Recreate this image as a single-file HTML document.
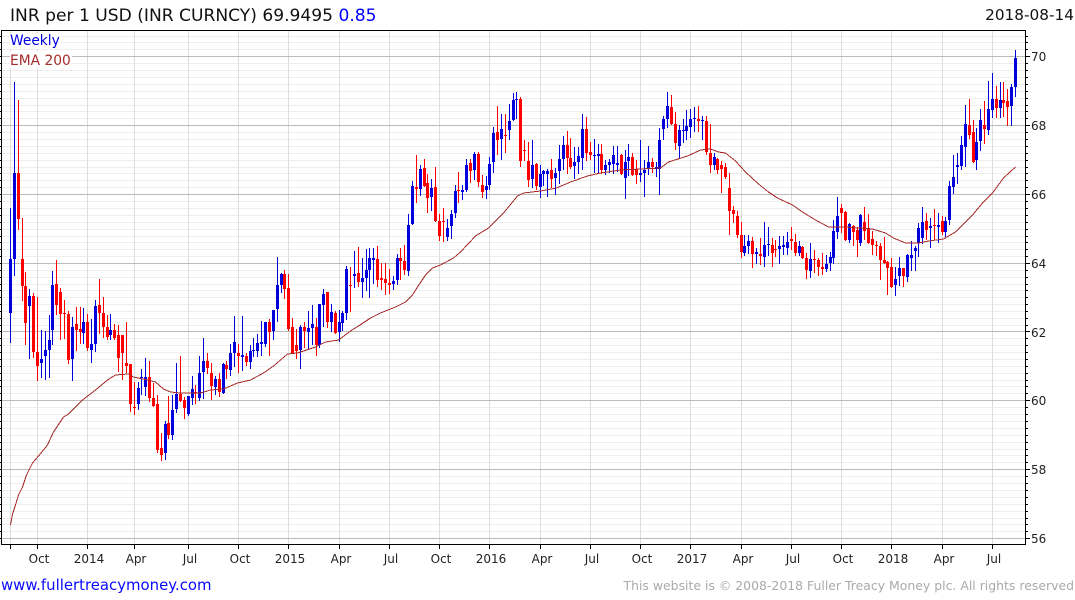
<!DOCTYPE html>
<html><head><meta charset="utf-8"><title>INR per 1 USD</title>
<style>
html,body{margin:0;padding:0;background:#fff;width:1075px;height:600px;overflow:hidden}
svg{display:block}
text{font-family:"DejaVu Sans",sans-serif;fill:#111}
.a{font-size:12px;fill:#222}
.g{shape-rendering:crispEdges;fill:none}
</style></head><body>
<svg width="1075" height="600" viewBox="0 0 1075 600" xmlns="http://www.w3.org/2000/svg">
<rect width="1075" height="600" fill="#fff"/>
<path class="g" stroke="#eee" d="M2 36.5H1025M2 42.5H1025M2 49.5H1025M2 63.5H1025M2 70.5H1025M2 77.5H1025M2 84.5H1025M2 91.5H1025M2 98.5H1025M2 105.5H1025M2 111.5H1025M2 118.5H1025M2 132.5H1025M2 139.5H1025M2 146.5H1025M2 153.5H1025M2 160.5H1025M2 167.5H1025M2 173.5H1025M2 180.5H1025M2 187.5H1025M2 201.5H1025M2 208.5H1025M2 215.5H1025M2 222.5H1025M2 229.5H1025M2 236.5H1025M2 242.5H1025M2 249.5H1025M2 256.5H1025M2 270.5H1025M2 277.5H1025M2 284.5H1025M2 290.5H1025M2 297.5H1025M2 304.5H1025M2 311.5H1025M2 318.5H1025M2 325.5H1025M2 338.5H1025M2 345.5H1025M2 352.5H1025M2 359.5H1025M2 366.5H1025M2 373.5H1025M2 380.5H1025M2 386.5H1025M2 393.5H1025M2 407.5H1025M2 414.5H1025M2 421.5H1025M2 428.5H1025M2 435.5H1025M2 442.5H1025M2 449.5H1025M2 455.5H1025M2 462.5H1025M2 476.5H1025M2 483.5H1025M2 490.5H1025M2 497.5H1025M2 504.5H1025M2 511.5H1025M2 518.5H1025M2 524.5H1025M2 531.5H1025"/>
<path class="g" stroke="#ddd" d="M10.5 31V544M37.5 31V544M87.5 31V544M134.5 31V544M188.5 31V544M238.5 31V544M288.5 31V544M339.5 31V544M389.5 31V544M439.5 31V544M489.5 31V544M540.5 31V544M590.5 31V544M640.5 31V544M690.5 31V544M741.5 31V544M791.5 31V544M841.5 31V544M891.5 31V544M942.5 31V544M992.5 31V544"/>
<path class="g" stroke="#bbb" d="M2 56.5H1025M2 125.5H1025M2 194.5H1025M2 263.5H1025M2 331.5H1025M2 400.5H1025M2 469.5H1025M2 538.5H1025"/>
<rect x="10" y="33" width="50" height="16" fill="#fff"/>
<rect x="10" y="52" width="62" height="16" fill="#fff"/>
<path class="g" stroke="#0000dd" stroke-width="1" d="M10.5 208V343M14.5 82V276M29.5 289V359M41.5 330V378M45.5 331V380M49.5 315V378M52.5 271V345M72.5 317V381M83.5 308V344M91.5 319V363M95.5 300V352M110.5 314V340M138.5 382V410M141.5 369V395M145.5 358V396M165.5 421V460M172.5 395V440M176.5 363V413M188.5 396V416M192.5 376V405M199.5 356V401M203.5 338V399M215.5 376V395M223.5 363V394M230.5 344V376M234.5 316V367M242.5 316V371M250.5 345V369M253.5 338V357M257.5 334V357M261.5 321V356M265.5 322V347M273.5 310V340M277.5 257V322M281.5 273V293M300.5 325V369M308.5 311V350M312.5 305V345M319.5 304V348M323.5 289V327M331.5 304V332M339.5 310V342M342.5 311V331M346.5 266V320M354.5 251V288M362.5 258V298M366.5 249V291M369.5 248V298M373.5 248V284M393.5 276V290M397.5 254V285M408.5 214V276M412.5 181V225M420.5 165V196M431.5 179V211M447.5 219V241M451.5 210V239M455.5 185V218M462.5 185V200M466.5 159V192M474.5 152V180M486.5 176V199M489.5 157V190M493.5 127V173M501.5 114V160M509.5 104V140M513.5 93V121M516.5 92V119M532.5 140V188M540.5 165V198M543.5 170V186M547.5 169V197M555.5 168V195M559.5 145V184M563.5 136V170M574.5 147V179M578.5 147V174M582.5 114V170M594.5 139V173M598.5 144V174M605.5 160V175M609.5 159V173M613.5 146V174M617.5 146V172M625.5 150V199M628.5 144V176M640.5 140V182M644.5 160V197M648.5 146V175M656.5 162V177M659.5 128V195M663.5 116V140M667.5 92V128M679.5 125V159M683.5 119V143M686.5 110V140M690.5 109V138M694.5 107V132M702.5 116V140M714.5 153V170M744.5 235V256M748.5 235V254M756.5 248V264M764.5 222V267M768.5 227V256M779.5 236V264M783.5 236V255M787.5 232V255M799.5 241V256M810.5 243V278M826.5 255V272M830.5 252V271M833.5 220V264M837.5 197V239M849.5 223V243M860.5 214V246M895.5 267V296M899.5 257V286M907.5 254V282M911.5 241V271M915.5 246V271M918.5 223V257M922.5 207V244M930.5 218V248M938.5 213V243M945.5 217V237M949.5 181V225M953.5 155V194M957.5 153V184M961.5 136V170M965.5 105V167M976.5 128V170M980.5 109V151M988.5 81V135M992.5 73V118M1000.5 82V118M1011.5 84V126M1015.5 50V97"/>
<path class="g" stroke="#0000dd" stroke-width="3" d="M10.5 259V313M14.5 173V259M29.5 296V306M41.5 359V363M45.5 350V356M49.5 340V350M52.5 285V330M72.5 327V359M83.5 322V333M91.5 344V350M95.5 306V344M110.5 330V335M138.5 388V404M141.5 377V378M145.5 377V387M165.5 424V453M172.5 410V435M176.5 394V409M188.5 396V414M192.5 389V398M199.5 373V398M203.5 361V372M215.5 379V387M223.5 364V393M230.5 353V370M234.5 342V353M242.5 355V357M250.5 351V362M253.5 350V351M257.5 343V351M261.5 342V344M265.5 322V344M273.5 310V331M277.5 285V309M281.5 274V285M300.5 327V350M308.5 328V332M312.5 324V328M319.5 304V345M323.5 294V305M331.5 312V322M339.5 322V332M342.5 313V323M346.5 269V313M354.5 274V276M362.5 278V282M366.5 270V278M369.5 258V270M373.5 258V260M393.5 281V284M397.5 258V280M408.5 225V271M412.5 186V224M420.5 169V189M431.5 188V197M447.5 228V237M451.5 214V226M455.5 191V213M462.5 190V192M466.5 165V190M474.5 154V170M486.5 186V190M489.5 164V185M493.5 133V162M501.5 129V139M509.5 121V130M513.5 100V120M516.5 99V100M532.5 165V179M540.5 174V187M543.5 171V174M547.5 171V174M555.5 173V178M559.5 159V171M563.5 145V159M574.5 162V166M578.5 156V162M582.5 129V158M594.5 155V156M598.5 154V156M605.5 165V170M609.5 162V165M613.5 155V164M617.5 163V165M625.5 162V178M628.5 157V161M640.5 173V175M644.5 170V173M648.5 162V168M656.5 167V169M659.5 140V169M663.5 119V129M667.5 106V119M679.5 130V146M683.5 130V131M686.5 126V131M690.5 119V127M694.5 118V119M702.5 120V121M714.5 157V165M744.5 246V253M748.5 241V246M756.5 252V254M764.5 245V257M768.5 244V245M779.5 246V249M783.5 245V247M787.5 242V248M799.5 246V253M810.5 259V271M826.5 264V269M830.5 257V263M833.5 231V258M837.5 216V232M849.5 224V240M860.5 215V243M895.5 279V285M899.5 268V276M907.5 255V277M911.5 255V258M915.5 248V251M918.5 228V243M922.5 222V238M930.5 226V228M938.5 225V227M945.5 221V232M949.5 186V220M953.5 177V187M957.5 165V167M961.5 145V166M965.5 124V147M976.5 142V160M980.5 120V141M988.5 109V130M992.5 99V110M1000.5 100V108M1011.5 87V106M1015.5 58V87"/>
<path class="g" stroke="#ff0000" stroke-width="1" d="M18.5 100V230M22.5 218V301M25.5 272V345M33.5 293V358M37.5 297V381M56.5 260V315M60.5 288V340M64.5 300V339M68.5 311V364M76.5 307V351M80.5 307V344M87.5 314V351M99.5 279V334M103.5 297V338M107.5 315V340M114.5 324V340M118.5 325V372M122.5 335V380M126.5 322V373M130.5 364V412M134.5 382V415M149.5 361V402M153.5 383V407M157.5 395V453M161.5 433V461M168.5 396V439M180.5 356V402M184.5 397V419M195.5 385V404M207.5 353V374M211.5 363V400M219.5 373V397M226.5 361V379M238.5 344V373M246.5 353V366M269.5 319V356M284.5 270V299M288.5 274V331M292.5 318V354M296.5 329V359M304.5 322V348M316.5 318V356M327.5 292V328M335.5 311V334M350.5 267V312M358.5 247V287M377.5 246V287M381.5 263V290M385.5 263V295M389.5 269V294M400.5 248V280M404.5 245V275M416.5 155V203M424.5 159V187M427.5 174V213M435.5 167V222M439.5 214V241M443.5 208V242M458.5 172V203M470.5 159V183M478.5 152V187M482.5 175V198M497.5 106V155M505.5 114V153M520.5 97V167M524.5 140V161M528.5 142V187M536.5 163V190M551.5 159V188M567.5 131V174M570.5 138V169M586.5 117V161M590.5 142V160M601.5 144V174M621.5 154V175M632.5 153V176M636.5 160V184M652.5 158V173M671.5 95V125M675.5 112V150M698.5 106V132M706.5 116V155M710.5 124V173M717.5 158V174M721.5 161V193M725.5 163V179M729.5 173V235M733.5 206V223M737.5 211V238M741.5 222V258M752.5 237V268M760.5 238V265M772.5 238V267M775.5 240V257M791.5 227V250M795.5 234V256M802.5 246V259M806.5 253V279M814.5 250V273M818.5 258V276M822.5 253V275M841.5 204V233M845.5 211V241M853.5 225V246M857.5 227V257M864.5 207V240M868.5 214V244M872.5 231V255M876.5 241V256M880.5 243V280M884.5 237V264M887.5 261V295M891.5 258V288M903.5 268V287M926.5 213V240M934.5 209V240M942.5 216V235M969.5 99V139M973.5 120V163M984.5 101V144M996.5 86V118M1003.5 82V117M1007.5 89V126"/>
<path class="g" stroke="#ff0000" stroke-width="3" d="M18.5 173V219M22.5 259V286M25.5 286V323M33.5 296V352M37.5 352V366M56.5 284V305M60.5 292V314M64.5 313V314M68.5 314V360M76.5 324V330M80.5 329V332M87.5 322V348M99.5 305V313M103.5 313V327M107.5 327V337M114.5 330V338M118.5 335V358M122.5 335V353M126.5 363V366M130.5 364V404M134.5 407V408M149.5 377V398M153.5 398V406M157.5 404V450M161.5 448V455M168.5 423V435M180.5 394V401M184.5 400V408M195.5 392V393M207.5 361V368M211.5 373V386M219.5 379V392M226.5 365V369M238.5 353V356M246.5 356V362M269.5 322V332M284.5 274V289M288.5 288V329M292.5 327V353M296.5 345V351M304.5 327V331M316.5 327V345M327.5 292V322M335.5 313V333M350.5 285V286M358.5 273V282M377.5 259V280M381.5 278V280M385.5 279V283M389.5 283V285M400.5 258V261M404.5 261V270M416.5 187V189M424.5 168V186M427.5 183V198M435.5 187V221M439.5 221V236M443.5 221V222M458.5 190V191M470.5 163V171M478.5 154V182M482.5 185V192M497.5 132V140M505.5 135V136M520.5 99V161M524.5 150V151M528.5 161V180M536.5 164V186M551.5 170V179M567.5 145V158M570.5 158V167M586.5 129V153M590.5 152V155M601.5 154V170M621.5 155V174M632.5 157V175M636.5 169V175M652.5 162V167M671.5 107V124M675.5 124V143M698.5 119V121M706.5 121V152M710.5 153V165M717.5 159V170M721.5 165V169M725.5 167V177M729.5 188V211M733.5 210V214M737.5 216V235M741.5 235V252M752.5 241V254M760.5 254V256M772.5 245V253M775.5 249V250M791.5 239V241M795.5 242V253M802.5 247V258M806.5 258V270M814.5 259V260M818.5 260V267M822.5 267V269M841.5 208V213M845.5 212V240M853.5 226V232M857.5 230V240M864.5 222V231M868.5 228V243M872.5 239V245M876.5 245V246M880.5 246V260M884.5 260V263M887.5 262V268M891.5 267V287M903.5 268V276M926.5 221V230M934.5 225V226M942.5 221V232M969.5 125V135M973.5 132V162M984.5 125V129M996.5 99V108M1003.5 100V103M1007.5 101V107"/>
<polyline fill="none" stroke="#a52a2a" stroke-width="1" shape-rendering="crispEdges" points="10.5,525 12.5,514 15.5,505 18.5,495 22.5,487 26.5,475 32.5,463 38.5,456 47.5,445 53.5,432 63.5,417 68.5,414 82.5,400 95.5,390 107.5,380 115.5,375 128.5,374 133.5,377 147.5,380 155.5,382 163.5,389 170.5,392 180.5,393 200.5,393 210.5,390 223.5,389 237.5,383 250.5,380 263.5,373 273.5,366 287.5,354 297.5,353 315.5,347 325.5,342 338.5,340 350.5,331 358.5,326 370.5,318 380.5,313 395.5,307 405.5,302 412.5,295 417.5,287 425.5,275 432.5,268 440.5,265 453.5,258 460.5,252 475.5,236 488.5,228 493.5,223 503.5,213 517.5,196 523.5,193 540.5,191 556.5,188 570.5,182 587.5,176 600.5,173 620.5,170 660.5,168 668.5,162 687.5,156 700.5,150 710.5,149 718.5,152 725.5,153 735.5,161 745.5,172 758.5,184 768.5,192 777.5,198 792.5,205 802.5,212 815.5,220 828.5,227 845.5,227 872.5,229 885.5,233 893.5,238 905.5,243 918.5,243 928.5,241 943.5,239 955.5,232 965.5,222 972.5,215 982.5,203 992.5,193 1003.5,178 1015.5,167"/>
<path class="g" stroke="#000" d="M1 30.5H1026M1 544.5H1026M1.5 30V545M1025.5 30V545"/>
<path class="g" stroke="#000" d="M0 36.5H2M0 42.5H2M0 49.5H2M0 56.5H2M0 63.5H2M0 70.5H2M0 77.5H2M0 84.5H2M0 91.5H2M0 98.5H2M0 105.5H2M0 111.5H2M0 118.5H2M0 125.5H2M0 132.5H2M0 139.5H2M0 146.5H2M0 153.5H2M0 160.5H2M0 167.5H2M0 173.5H2M0 180.5H2M0 187.5H2M0 194.5H2M0 201.5H2M0 208.5H2M0 215.5H2M0 222.5H2M0 229.5H2M0 236.5H2M0 242.5H2M0 249.5H2M0 256.5H2M0 263.5H2M0 270.5H2M0 277.5H2M0 284.5H2M0 290.5H2M0 297.5H2M0 304.5H2M0 311.5H2M0 318.5H2M0 325.5H2M0 331.5H2M0 338.5H2M0 345.5H2M0 352.5H2M0 359.5H2M0 366.5H2M0 373.5H2M0 380.5H2M0 386.5H2M0 393.5H2M0 400.5H2M0 407.5H2M0 414.5H2M0 421.5H2M0 428.5H2M0 435.5H2M0 442.5H2M0 449.5H2M0 455.5H2M0 462.5H2M0 469.5H2M0 476.5H2M0 483.5H2M0 490.5H2M0 497.5H2M0 504.5H2M0 511.5H2M0 518.5H2M0 524.5H2M0 531.5H2M0 538.5H2"/>
<path class="g" stroke="#000" d="M1026 36.5h2M1026 42.5h2M1026 49.5h2M1026 56.5h4M1026 63.5h2M1026 70.5h2M1026 77.5h2M1026 84.5h2M1026 91.5h2M1026 98.5h2M1026 105.5h2M1026 111.5h2M1026 118.5h2M1026 125.5h4M1026 132.5h2M1026 139.5h2M1026 146.5h2M1026 153.5h2M1026 160.5h2M1026 167.5h2M1026 173.5h2M1026 180.5h2M1026 187.5h2M1026 194.5h4M1026 201.5h2M1026 208.5h2M1026 215.5h2M1026 222.5h2M1026 229.5h2M1026 236.5h2M1026 242.5h2M1026 249.5h2M1026 256.5h2M1026 263.5h4M1026 270.5h2M1026 277.5h2M1026 284.5h2M1026 290.5h2M1026 297.5h2M1026 304.5h2M1026 311.5h2M1026 318.5h2M1026 325.5h2M1026 331.5h4M1026 338.5h2M1026 345.5h2M1026 352.5h2M1026 359.5h2M1026 366.5h2M1026 373.5h2M1026 380.5h2M1026 386.5h2M1026 393.5h2M1026 400.5h4M1026 407.5h2M1026 414.5h2M1026 421.5h2M1026 428.5h2M1026 435.5h2M1026 442.5h2M1026 449.5h2M1026 455.5h2M1026 462.5h2M1026 469.5h4M1026 476.5h2M1026 483.5h2M1026 490.5h2M1026 497.5h2M1026 504.5h2M1026 511.5h2M1026 518.5h2M1026 524.5h2M1026 531.5h2M1026 538.5h4"/>
<path class="g" stroke="#000" d="M10.5 545V549M37.5 545V549M87.5 545V549M134.5 545V549M188.5 545V549M238.5 545V549M288.5 545V549M339.5 545V549M389.5 545V549M439.5 545V549M489.5 545V549M540.5 545V549M590.5 545V549M640.5 545V549M690.5 545V549M741.5 545V549M791.5 545V549M841.5 545V549M891.5 545V549M942.5 545V549M992.5 545V549"/>
<text x="10" y="21" style="font-size:17.1px">INR per 1 USD (INR CURNCY) 69.9495 <tspan style="fill:#0000ff">0.85</tspan></text>
<text x="1074" y="20" text-anchor="end" style="font-size:15.3px">2018-08-14</text>
<text x="10" y="45" style="font-size:13.8px;fill:#0000e0">Weekly</text>
<text x="10" y="65" style="font-size:13.8px;fill:#a52a2a">EMA 200</text>
<g class="a">
<text class="a" x="1031" y="61">70</text><text class="a" x="1031" y="130">68</text><text class="a" x="1031" y="199">66</text><text class="a" x="1031" y="268">64</text><text class="a" x="1031" y="337">62</text><text class="a" x="1031" y="405">60</text><text class="a" x="1031" y="474">58</text><text class="a" x="1031" y="543">56</text>
</g>
<g text-anchor="middle">
<text class="a" x="39" y="563">Oct</text><text class="a" x="89" y="563">2014</text><text class="a" x="136" y="563">Apr</text><text class="a" x="190" y="563">Jul</text><text class="a" x="240" y="563">Oct</text><text class="a" x="290" y="563">2015</text><text class="a" x="341" y="563">Apr</text><text class="a" x="391" y="563">Jul</text><text class="a" x="441" y="563">Oct</text><text class="a" x="491" y="563">2016</text><text class="a" x="542" y="563">Apr</text><text class="a" x="592" y="563">Jul</text><text class="a" x="642" y="563">Oct</text><text class="a" x="692" y="563">2017</text><text class="a" x="743" y="563">Apr</text><text class="a" x="793" y="563">Jul</text><text class="a" x="843" y="563">Oct</text><text class="a" x="893" y="563">2018</text><text class="a" x="944" y="563">Apr</text><text class="a" x="994" y="563">Jul</text>
</g>
<text x="1" y="590" style="font-size:14.9px;fill:#0a0aff">www.fullertreacymoney.com</text>
<text x="1074" y="590" text-anchor="end" style="font-size:12.45px;fill:#aaa">This website is © 2008-2018 Fuller Treacy Money plc. All rights reserved</text>
</svg>
</body></html>
